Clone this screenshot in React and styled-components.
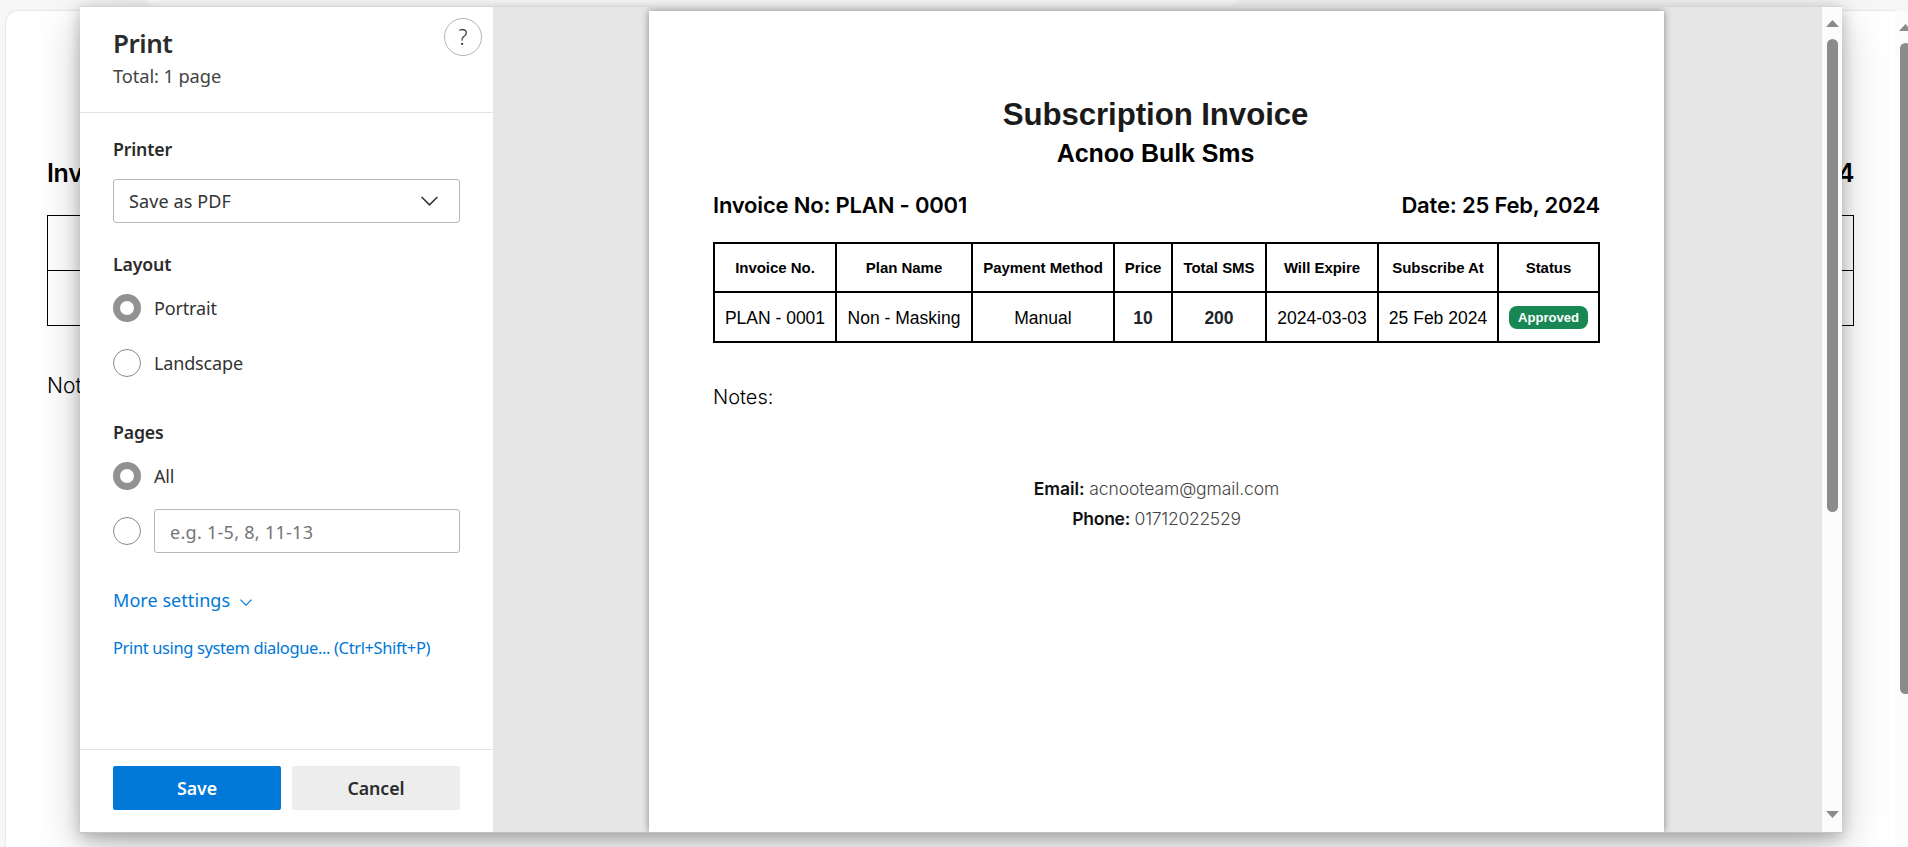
import React from "react";
import styled, { createGlobalStyle, css } from "styled-components";

const GlobalStyle = createGlobalStyle`
  *, *::before, *::after { box-sizing: border-box; }
  html, body, #root { height: 100%; }
  body {
    margin: 0;
    overflow: hidden;
    background: #f7f7f7;
    font-family: "Noto Sans", "Open Sans", sans-serif;
  }
`;

const ui = `"Noto Sans", "Open Sans", sans-serif`;
const geo = `Inter, "Open Sans", sans-serif`;
const arial = `"Liberation Sans", Arial, sans-serif`;

/* ---------- page behind the dialog ---------- */

const Page = styled.div`
  position: relative;
  width: 100%;
  height: 847px;
  overflow: hidden;
  display: flex;
  flex-direction: column;
`;

const TopCard = styled.div`
  flex: none;
  width: 1097px;
  height: 6px;
  margin-left: 143px;
  overflow: hidden;
  display: flex;
  align-items: flex-end;
`;

const TopCardBody = styled.div`
  flex: 1;
  height: 40px;
  background: #fff;
  border-radius: 14px;
`;

const PageBody = styled.div`
  flex: 1;
  display: flex;
  margin-top: 5px;
`;

const PageCard = styled.div`
  flex: 1;
  margin-left: 6px;
  padding: 147px 41px 0;
  background: #fff;
  border-radius: 12px 0 0 0;
  box-shadow: 0 0 2px rgba(0, 0, 0, 0.22);
`;

const PageMeta = styled.div`
  display: flex;
  justify-content: space-between;
  font: 600 25px/30px ${geo};
  letter-spacing: -0.3px;
  color: #000;
`;

const PageTable = styled.div`
  margin-top: 27px;
  border: 1px solid #000;
  height: 111px;
  display: grid;
  grid-template-rows: 55px 1fr;
`;

const PageTableRow = styled.div`
  border-bottom: ${(p) => (p.$last ? "0" : "1px solid #000")};
`;

const PageNotes = styled.div`
  margin-top: 43px;
  font: 350 21px/34px ${geo};
  color: #000;
`;

/* ---------- scrollbars ---------- */

const Track = styled.div`
  flex: none;
  width: ${(p) => p.$width}px;
  background: #fcfcfc;
  display: flex;
  flex-direction: column;
  align-items: ${(p) => (p.$edge ? "flex-start" : "center")};
  padding: 13px 0 14px ${(p) => (p.$edge ? 4 : 1)}px;
  overflow: hidden;
`;

const Thumb = styled.div`
  width: 11px;
  height: ${(p) => p.$length}px;
  margin: 12px 0 auto ${(p) => (p.$edge ? 1 : 0)}px;
  flex: none;
  border-radius: 6px;
  background: #8b8b8b;
`;

const ArrowIcon = styled.svg`
  flex: none;
  width: 13px;
  height: 7px;
`;

const Arrow = ({ down }) => (
  <ArrowIcon viewBox="0 0 13 7">
    <path d={down ? "M0 0H13L6.5 7Z" : "M0 7H13L6.5 0Z"} fill="#8b8b8b" />
  </ArrowIcon>
);

/* ---------- dialog ---------- */

const Dialog = styled.div`
  position: absolute;
  left: 80px;
  top: 6px;
  width: 1762px;
  height: 827px;
  display: flex;
  border-top: 1px solid #d6d6d6;
  border-bottom: 1px solid #c4c4c4;
  background: #fff;
  box-shadow: 0 14px 42px rgba(0, 0, 0, 0.22), 0 4px 14px rgba(0, 0, 0, 0.24);
`;

const Sidebar = styled.div`
  flex: none;
  width: 413px;
  display: flex;
  flex-direction: column;
  color: #2b2b2b;
  font-family: ${ui};
`;

const Header = styled.div`
  flex: none;
  height: 106px;
  padding: 11px 11px 0 33px;
  border-bottom: 1px solid #e5e5e5;
  display: flex;
  justify-content: space-between;
`;

const HeaderText = styled.div`
  padding-top: 7px;
`;

const Title = styled.h1`
  margin: 0 0 1px;
  font-size: 26px;
  line-height: 36px;
  font-weight: 600;
  letter-spacing: -0.5px;
`;

const Total = styled.div`
  font-size: 18.3px;
  line-height: 28px;
  letter-spacing: -0.1px;
  color: #444;
`;

const Help = styled.div`
  width: 38px;
  height: 38px;
  border: 1px solid #b5b5b5;
  border-radius: 50%;
  display: flex;
  align-items: center;
  justify-content: center;
  font-size: 21px;
  font-weight: 300;
`;

const Body = styled.div`
  flex: 1;
  padding: 24px 33px 0;
`;

const Section = styled.div`
  margin-top: ${(p) => p.$top || 0}px;
`;

const Label = styled.div`
  font-size: 17.7px;
  line-height: 24px;
  font-weight: 600;
  letter-spacing: -0.15px;
  margin-bottom: 18px;
`;

const field = css`
  height: 44px;
  border: 1px solid #b8b8b8;
  border-radius: 3px;
  padding: 0 21px 0 15px;
  display: flex;
  align-items: center;
  font-size: 18px;
`;

const Select = styled.div`
  ${field}
  justify-content: space-between;
  letter-spacing: 0.12px;
  color: #333;
`;

const RangeInput = styled.div`
  ${field}
  flex: 1;
  padding-top: 1px;
  letter-spacing: 0.28px;
  color: #757575;
`;

const RadioRow = styled.div`
  display: flex;
  align-items: center;
  gap: 13px;
  min-height: 28px;
  margin-top: ${(p) => p.$top || 0}px;
  font-size: 18px;
  line-height: 28px;
  letter-spacing: -0.15px;
  color: #333;
`;

const Radio = styled.div`
  flex: none;
  width: 28px;
  height: 28px;
  border-radius: 50%;
  border: ${(p) => (p.$on ? "7px solid #929292" : "1px solid #8a8a8a")};
`;

const Link = styled.div`
  display: flex;
  align-items: center;
  gap: 10px;
  margin-top: ${(p) => p.$top}px;
  line-height: 24px;
  font-size: ${(p) => p.$size}px;
  letter-spacing: ${(p) => p.$ls}px;
  color: #0078d7;
  white-space: nowrap;

  svg {
    margin-top: 5px;
  }
`;

const Footer = styled.div`
  flex: none;
  height: 83px;
  padding: 16px 33px 0;
  border-top: 1px solid #e5e5e5;
  display: grid;
  grid-template-columns: 1fr 1fr;
  gap: 11px;
`;

const Button = styled.div`
  height: 44px;
  border-radius: 2px;
  display: flex;
  align-items: center;
  justify-content: center;
  font-size: 17.8px;
  font-weight: 600;
  letter-spacing: -0.1px;
  background: ${(p) => (p.$primary ? "#0078d7" : "#ededed")};
  color: ${(p) => (p.$primary ? "#fff" : "#2b2b2b")};
`;

/* ---------- preview ---------- */

const Preview = styled.div`
  flex: 1;
  display: flex;
  padding: 4px 158px 0 156px;
  background: #e6e6e6;
  overflow: hidden;
`;

const Paper = styled.div`
  flex: 1;
  padding: 84px 64px 0;
  background: #fff;
  box-shadow: 0 0 7px rgba(0, 0, 0, 0.42);
`;

const InvoiceTitle = styled.h2`
  margin: 0;
  padding-right: 2px;
  text-align: center;
  font: 700 31.25px/40px ${arial};
  letter-spacing: -0.08px;
  color: #1a1a1a;
`;

const Company = styled.h3`
  margin: 2px 0 0;
  padding-right: 2px;
  text-align: center;
  font: 700 25px/32px ${arial};
  letter-spacing: -0.08px;
  color: #000;
`;

const Meta = styled.div`
  display: flex;
  justify-content: space-between;
  margin: 21px 0 22px;
  font: 600 22px/30px ${geo};
  letter-spacing: -0.19px;
  color: #000;
`;

const Table = styled.table`
  width: 887px;
  table-layout: fixed;
  border-collapse: collapse;
  font-family: ${arial};
  color: #000;
  text-align: center;
`;

const Th = styled.th`
  height: 49px;
  padding: 0;
  border: 2px solid #000;
  font-size: 15px;
  letter-spacing: -0.03px;
  white-space: nowrap;
`;

const Td = styled.td`
  height: 50px;
  padding: ${(p) => (p.$badge ? 1 : 2)}px 0 0;
  border: 2px solid #000;
  font-size: 17.5px;
  font-weight: ${(p) => (p.$strong ? 700 : 400)};
  color: ${(p) => (p.$strong ? "#212529" : "#000")};
  white-space: nowrap;
`;

const Badge = styled.span`
  display: block;
  width: 79px;
  height: 23px;
  margin: 0 auto;
  border-radius: 8px;
  background: #198754;
  color: #fff;
  font-size: 13.1px;
  line-height: 23px;
  font-weight: 700;
`;

const Notes = styled.div`
  margin-top: 40px;
  font: 350 20px/28px ${geo};
  color: #000;
`;

const Contact = styled.div`
  margin-top: 63px;
  text-align: center;
  font: 300 17.5px/30px ${geo};
  color: #444;
`;

const ContactLine = styled.div`
  letter-spacing: ${(p) => p.$ls}px;
`;

const ContactName = styled.b`
  font-weight: 600;
  color: #111;
`;

const columns = [
  { head: "Invoice No.", width: 122, value: "PLAN - 0001" },
  { head: "Plan Name", width: 136, value: "Non - Masking" },
  { head: "Payment Method", width: 142, value: "Manual" },
  { head: "Price", width: 58, value: "10", strong: true },
  { head: "Total SMS", width: 94, value: "200", strong: true },
  { head: "Will Expire", width: 112, value: "2024-03-03" },
  { head: "Subscribe At", width: 120, value: "25 Feb 2024" },
  { head: "Status", width: 101, value: <Badge>Approved</Badge>, badge: true },
];

const Chevron = ({ width, height, weight }) => (
  <svg width={width} height={height} viewBox="0 0 17 9.5" fill="none">
    <path d="M0.6 0.7L8.5 8.6L16.4 0.7" stroke="currentColor" strokeWidth={weight} />
  </svg>
);

export default function App() {
  return (
    <>
      <GlobalStyle />
      <Page>
        <TopCard>
          <TopCardBody />
        </TopCard>
        <PageBody>
          <PageCard>
            <PageMeta>
              <span>Invoice No: PLAN - 0001</span>
              <span>Date: 25 Feb, 2024</span>
            </PageMeta>
            <PageTable>
              <PageTableRow />
              <PageTableRow $last />
            </PageTable>
            <PageNotes>Notes:</PageNotes>
          </PageCard>
          <Track $width={13} $edge>
            <Arrow />
            <Thumb $length={651} $edge />
          </Track>
        </PageBody>

        <Dialog role="dialog">
          <Sidebar>
            <Header>
              <HeaderText>
                <Title>Print</Title>
                <Total>Total: 1 page</Total>
              </HeaderText>
              <Help>?</Help>
            </Header>
            <Body>
              <Section>
                <Label>Printer</Label>
                <Select>
                  Save as PDF
                  <Chevron width={17} height={10} weight={1.5} />
                </Select>
              </Section>
              <Section $top={29}>
                <Label>Layout</Label>
                <RadioRow>
                  <Radio $on />
                  Portrait
                </RadioRow>
                <RadioRow $top={27}>
                  <Radio />
                  Landscape
                </RadioRow>
              </Section>
              <Section $top={43}>
                <Label>Pages</Label>
                <RadioRow>
                  <Radio $on />
                  All
                </RadioRow>
                <RadioRow $top={19}>
                  <Radio />
                  <RangeInput>e.g. 1-5, 8, 11-13</RangeInput>
                </RadioRow>
              </Section>
              <Link $top={35} $size={18} $ls={0.06}>
                More settings
                <Chevron width={12} height={7} weight={1.6} />
              </Link>
              <Link $top={24} $size={16.5} $ls={-0.38}>
                Print using system dialogue... (Ctrl+Shift+P)
              </Link>
            </Body>
            <Footer>
              <Button $primary>Save</Button>
              <Button>Cancel</Button>
            </Footer>
          </Sidebar>

          <Preview>
            <Paper>
              <InvoiceTitle>Subscription Invoice</InvoiceTitle>
              <Company>Acnoo Bulk Sms</Company>
              <Meta>
                <span>Invoice No: PLAN - 0001</span>
                <span>Date: 25 Feb, 2024</span>
              </Meta>
              <Table>
                <colgroup>
                  {columns.map((c) => (
                    <col key={c.head} width={c.width} />
                  ))}
                </colgroup>
                <thead>
                  <tr>
                    {columns.map((c) => (
                      <Th key={c.head}>{c.head}</Th>
                    ))}
                  </tr>
                </thead>
                <tbody>
                  <tr>
                    {columns.map((c) => (
                      <Td key={c.head} $strong={c.strong} $badge={c.badge}>
                        {c.value}
                      </Td>
                    ))}
                  </tr>
                </tbody>
              </Table>
              <Notes>Notes:</Notes>
              <Contact>
                <ContactLine $ls={-0.09}>
                  <ContactName>Email:</ContactName> acnooteam@gmail.com
                </ContactLine>
                <ContactLine $ls={-0.27}>
                  <ContactName>Phone:</ContactName> 01712022529
                </ContactLine>
              </Contact>
            </Paper>
          </Preview>

          <Track $width={20}>
            <Arrow />
            <Thumb $length={473} />
            <Arrow down />
          </Track>
        </Dialog>
      </Page>
    </>
  );
}
